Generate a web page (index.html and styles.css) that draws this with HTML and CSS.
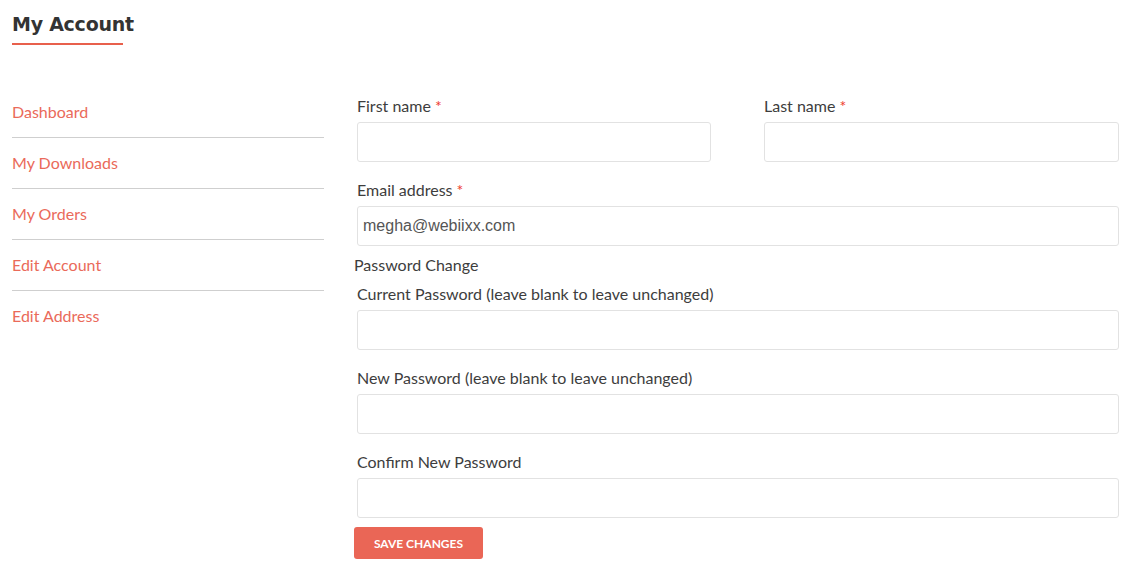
FILE: index.html
```html
<!DOCTYPE html>
<html lang="en">
<head>
<meta charset="utf-8">
<title>My Account</title>
<link rel="stylesheet" href="styles.css">
</head>
<body>
<div class="page">
  <h1 class="page-title">My Account</h1>
  <div class="account">
    <nav class="account-nav">
      <a class="nav-item" href="#">Dashboard</a>
      <a class="nav-item" href="#">My Downloads</a>
      <a class="nav-item" href="#">My Orders</a>
      <a class="nav-item" href="#">Edit Account</a>
      <a class="nav-item" href="#">Edit Address</a>
    </nav>
    <form class="account-form">
      <div class="row-split">
        <div class="field">
          <label class="label">First name <span class="req">*</span></label>
          <input class="input" type="text">
        </div>
        <div class="field">
          <label class="label">Last name <span class="req">*</span></label>
          <input class="input" type="text">
        </div>
      </div>
      <div class="field">
        <label class="label">Email address <span class="req">*</span></label>
        <input class="input" type="email" value="megha@webiixx.com">
      </div>
      <div class="legend">Password Change</div>
      <div class="field">
        <label class="label">Current Password (leave blank to leave unchanged)</label>
        <input class="input" type="password">
      </div>
      <div class="field">
        <label class="label">New Password (leave blank to leave unchanged)</label>
        <input class="input" type="password">
      </div>
      <div class="field field-last">
        <label class="label">Confirm New Password</label>
        <input class="input" type="password">
      </div>
      <button class="btn" type="button">SAVE CHANGES</button>
    </form>
  </div>
</div>
</body>
</html>
```

FILE: styles.css
```css
* { box-sizing: border-box; }
html, body { margin: 0; padding: 0; background: #fff; }
body {
  font-family: Lato, "Open Sans", sans-serif;
  color: #3d3d3d;
}
.page { padding: 0 12px; }
.page-title {
  margin: 12px 0 0;
  font-family: "DejaVu Sans", sans-serif;
  font-weight: bold;
  font-size: 19px;
  line-height: 24px;
  color: #333;
  letter-spacing: -0.25px;
}
.page-title::after {
  content: "";
  display: block;
  width: 111px;
  height: 2px;
  margin-top: 7px;
  background: #e8604c;
}
.account {
  display: grid;
  grid-template-columns: 312px 1fr;
  column-gap: 30px;
  margin-top: 42px;
}
.account-nav { display: flex; flex-direction: column; }
.nav-item {
  display: block;
  height: 51px;
  line-height: 50px;
  font-size: 16px;
  color: #ea6a5a;
  text-decoration: none;
  border-bottom: 1px solid #cfcfcf;
}
.nav-item:last-child { border-bottom: none; }
.account-form { padding-top: 8px; }
.row-split {
  display: grid;
  grid-template-columns: 357fr 355fr;
  column-gap: 53px;
}
.field {
  display: flex;
  flex-direction: column;
  padding-left: 3px;
  margin-bottom: 17px;
}
.row-split .field:last-child { padding-left: 0; }
.label {
  font-size: 16px;
  line-height: 22px;
  margin-bottom: 5px;
  color: #3d3d3d;
}
.req { color: #ee3a2e; }
.input {
  height: 40px;
  width: 100%;
  border: 1px solid #e2e2e2;
  border-radius: 3px;
  padding: 0 5px;
  font-family: "Liberation Sans", Arial, sans-serif;
  font-size: 16px;
  color: #555;
  background: #fff;
  outline: none;
}
.field:has(+ .legend) { margin-bottom: 8px; }
.legend {
  font-size: 16px;
  line-height: 22px;
  margin-bottom: 7px;
  color: #3d3d3d;
}
.field-last { margin-bottom: 9px; }
.btn {
  display: inline-block;
  height: 32px;
  width: 129px;
  padding: 0;
  border: none;
  border-radius: 3px;
  background: #ea6656;
  color: #fff;
  font-family: Lato, sans-serif;
  font-weight: bold;
  font-size: 12px;
  text-align: center;
}
```
